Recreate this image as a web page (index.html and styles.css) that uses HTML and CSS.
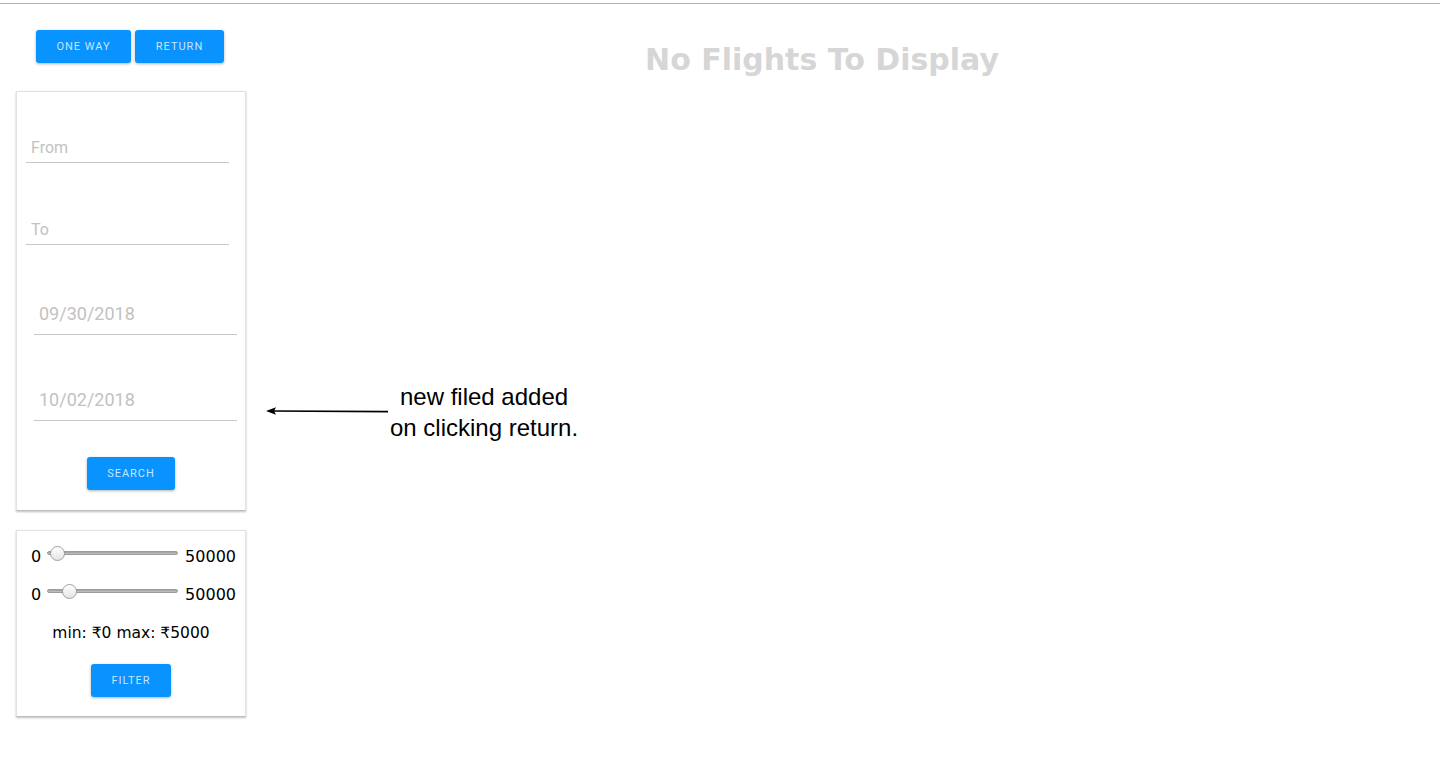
FILE: index.html
```html
<!DOCTYPE html>
<html>
<head>
<meta charset="utf-8">
<link rel="stylesheet" href="styles.css">
</head>
<body>
<div class="topline"></div>
<div class="page">
  <aside class="side">
    <div class="tabs">
      <button class="btn tab">One way</button>
      <button class="btn tab">Return</button>
    </div>
    <div class="card search-card">
      <div class="field f-from"><span class="ph">From</span></div>
      <div class="field f-to"><span class="ph">To</span></div>
      <div class="field date d1"><span class="ph">09/30/2018</span></div>
      <div class="field date d2"><span class="ph">10/02/2018</span></div>
      <div class="btn-row"><button class="btn search">Search</button></div>
    </div>
    <div class="card filter-card">
      <div class="range-row">
        <span class="lo">0</span>
        <div class="track"><span class="thumb t1"></span></div>
        <span class="hi">50000</span>
      </div>
      <div class="range-row r2">
        <span class="lo">0</span>
        <div class="track"><span class="thumb t2"></span></div>
        <span class="hi">50000</span>
      </div>
      <div class="minmax">min: ₹0 max: ₹5000</div>
      <div class="btn-row"><button class="btn filter">Filter</button></div>
    </div>
  </aside>
  <main class="main">
    <h1 class="empty">No Flights To Display</h1>
  </main>
  <div class="note">
    <svg class="arrow" width="124" height="10" viewBox="0 0 124 10">
      <line x1="6" y1="5" x2="122" y2="5.6" stroke="#000" stroke-width="1.6"/>
      <path d="M0 5 L10 1.2 L8 5 L10 8.8 Z" fill="#000"/>
    </svg>
    <div class="note-text">new filed added<br>on clicking return.</div>
  </div>
</div>
</body>
</html>
```

FILE: styles.css
```css
html, body {
  margin: 0;
  padding: 0;
  background: #fff;
}
body {
  font-family: "DejaVu Sans", Verdana, sans-serif;
  color: #000;
}
.topline {
  height: 3px;
  border-bottom: 1px solid #b4b4b4;
}
.page {
  display: flex;
  position: relative;
  min-height: 767px;
}
.side {
  width: 230px;
  margin-left: 16px;
  display: flex;
  flex-direction: column;
}
.tabs {
  display: flex;
  gap: 4px;
  margin-top: 26px;
  padding-left: 20px;
}
.btn {
  background: #0893ff;
  border: none;
  border-radius: 3px;
  box-shadow: 0 1px 3px rgba(0, 0, 0, 0.3);
  color: rgba(255, 255, 255, 0.78);
  font-family: Roboto, "Liberation Sans", sans-serif;
  font-size: 11px;
  letter-spacing: 1px;
  text-transform: uppercase;
  height: 33px;
  padding: 0;
  cursor: pointer;
}
.tab:first-child { width: 95px; }
.tab:last-child { width: 89px; }
.card {
  border: 1px solid #e2e2e2;
  border-bottom-color: #bdbdbd;
  box-shadow: 0 1px 2px rgba(0, 0, 0, 0.25);
  background: #fff;
  box-sizing: border-box;
}
.search-card {
  margin-top: 28px;
  height: 420px;
  padding: 0 16px 0 9px;
}
.field {
  border-bottom: 1px solid #c8c8c8;
  font-family: Roboto, "Liberation Sans", sans-serif;
  color: #c2c2c2;
}
.field .ph { display: block; }
.f-from, .f-to {
  font-size: 16px;
  line-height: 20px;
  padding: 1px 0 4px 5px;
}
.f-from { margin-top: 45px; }
.f-to { margin-top: 56px; }
.date {
  font-size: 18px;
  line-height: 22px;
  padding: 1px 0 9px 5px;
  margin-left: 8px;
  margin-right: -8px;
}
.d1 { margin-top: 57px; }
.d2 { margin-top: 53px; }
.btn-row {
  display: flex;
  justify-content: center;
}
.search-card .btn-row { margin-top: 36px; padding-left: 7px; }
.search { width: 88px; }
.filter-card {
  margin-top: 19px;
  height: 187px;
  padding: 0 9px 0 14px;
}
.range-row {
  display: flex;
  align-items: center;
  height: 22px;
  margin-top: 14px;
  font-size: 16px;
}
.range-row.r2 { margin-top: 16px; }
.lo { width: 16px; }
.hi { margin-left: 7px; }
.track {
  position: relative;
  width: 133px;
  height: 4px;
  border-radius: 2px;
  background: linear-gradient(#9a9a9a, #c8c8c8);
  border: 1px solid #9c9c9c;
  box-sizing: border-box;
  margin-top: -6px;
}
.thumb {
  position: absolute;
  top: -6px;
  width: 15px;
  height: 15px;
  border-radius: 50%;
  background: linear-gradient(#ffffff, #e4e4e4);
  border: 1px solid #a0a0a0;
  box-sizing: border-box;
}
.t1 { left: 2px; }
.t2 { left: 14px; }
.minmax {
  text-align: center;
  font-size: 15.5px;
  margin-top: 17px;
  line-height: 22px;
  padding-right: 5px;
}
.filter-card .btn-row { margin-top: 20px; padding-right: 5px; }
.filter { width: 80px; }
.main {
  flex: 1;
  display: flex;
  justify-content: center;
  padding-right: 42px;
}
.empty {
  margin: 36px 0 0 0;
  font-size: 30px;
  line-height: 40px;
  font-weight: bold;
  color: #d6d6d6;
}
.note {
  position: absolute;
  left: 266px;
  top: 377px;
  display: flex;
  align-items: flex-start;
}
.arrow { display: block; margin-top: 25px; }
.note-text {
  font-family: "Liberation Sans", Arial, sans-serif;
  font-size: 24px;
  line-height: 31px;
  text-align: center;
  margin-left: 0;
}
```
